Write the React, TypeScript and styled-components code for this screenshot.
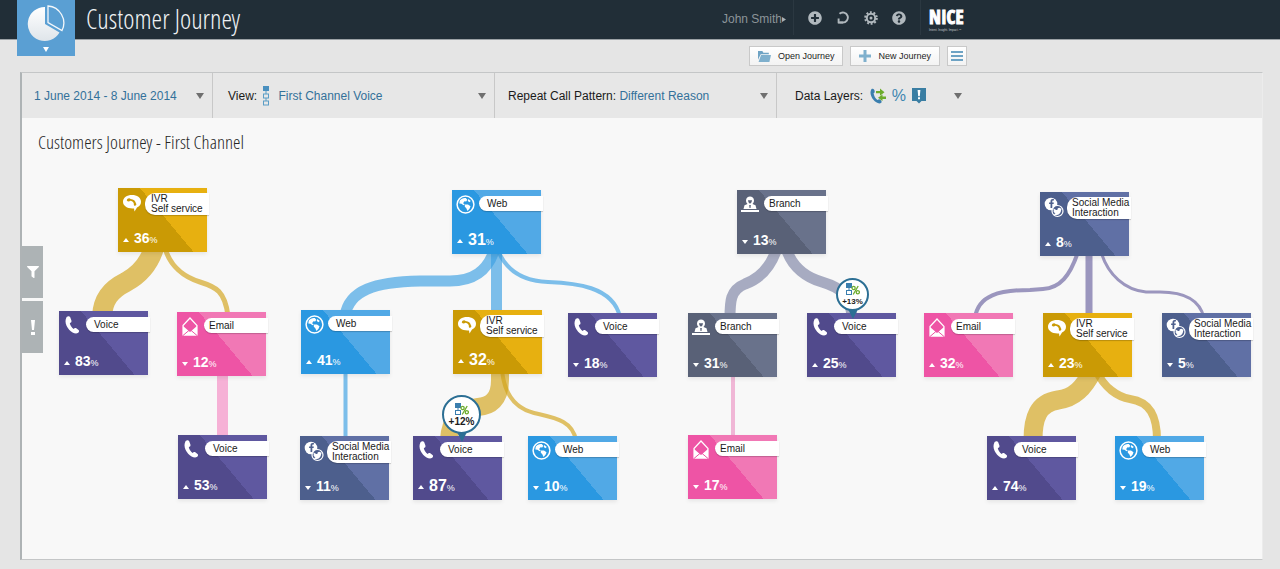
import React from 'react';
import styled, { createGlobalStyle } from 'styled-components';
import { FaPlusCircle, FaQuestionCircle, FaFacebookF, FaTwitter, FaFilter } from 'react-icons/fa';

const sans = '"Liberation Sans", Arial, sans-serif';
const condensed = '"Open Sans Condensed Light", "Liberation Sans Narrow", "Open Sans", sans-serif';

const GlobalStyle = createGlobalStyle`
  * { box-sizing: border-box; }
  body {
    margin: 0;
    background: #e5e5e5;
    font-family: ${sans};
    color: #1d1d1d;
  }
  button, select { font-family: inherit; }
`;

/* ---------- data ---------- */

type Channel = 'ivr' | 'voice' | 'email' | 'web' | 'branch' | 'social';

interface JourneyNode {
  channel: Channel;
  x: number;
  y: number;
  value: number;
  up: boolean;
  large?: boolean;
}

const channels: Record<Channel, { lines: string[]; dark: string; light: string; indent: number }> = {
  ivr: { lines: ['IVR', 'Self service'], dark: '#ca9a05', light: '#e7b010', indent: 6 },
  voice: { lines: ['Voice'], dark: '#514a8c', light: '#5f58a0', indent: 8 },
  email: { lines: ['Email'], dark: '#ee54a5', light: '#f178b5', indent: 5 },
  web: { lines: ['Web'], dark: '#2a98e1', light: '#51a9e6', indent: 8 },
  branch: { lines: ['Branch'], dark: '#596177', light: '#69728b', indent: 5 },
  social: { lines: ['Social Media', 'Interaction'], dark: '#4d5f8d', light: '#6070a5', indent: 5 },
};

const nodes: JourneyNode[] = [
  { channel: 'ivr', x: 96, y: 70, value: 36, up: true },
  { channel: 'voice', x: 37, y: 193, value: 83, up: true },
  { channel: 'email', x: 155, y: 194, value: 12, up: false },
  { channel: 'voice', x: 156, y: 317, value: 53, up: true },
  { channel: 'web', x: 430, y: 72, value: 31, up: true, large: true },
  { channel: 'web', x: 279, y: 192, value: 41, up: true },
  { channel: 'social', x: 278, y: 318, value: 11, up: false },
  { channel: 'ivr', x: 431, y: 192, value: 32, up: true, large: true },
  { channel: 'voice', x: 546, y: 195, value: 18, up: false },
  { channel: 'voice', x: 391, y: 318, value: 87, up: true, large: true },
  { channel: 'web', x: 506, y: 318, value: 10, up: false },
  { channel: 'branch', x: 715, y: 72, value: 13, up: false },
  { channel: 'branch', x: 666, y: 195, value: 31, up: false },
  { channel: 'voice', x: 785, y: 195, value: 25, up: true },
  { channel: 'email', x: 666, y: 317, value: 17, up: false },
  { channel: 'social', x: 1018, y: 74, value: 8, up: true },
  { channel: 'email', x: 902, y: 195, value: 32, up: true },
  { channel: 'ivr', x: 1021, y: 195, value: 23, up: true },
  { channel: 'social', x: 1140, y: 195, value: 5, up: false },
  { channel: 'voice', x: 965, y: 318, value: 74, up: true },
  { channel: 'web', x: 1093, y: 318, value: 19, up: false },
];

const gold = '#d2a218';
const blue = '#3b9fe2';
const slate = '#7d83a4';
const violet = '#6a63a0';
const pink = '#f48cc4';

const links: { d: string; color: string; width: number }[] = [
  { d: 'M154 248C148 267 137 276 126 282C110 290 103 300 102 316', color: gold, width: 20 },
  { d: 'M165 248C170 266 184 277 200 282S225 291 228 316', color: gold, width: 5 },
  { d: 'M222.500 374V440', color: pink, width: 11 },
  { d: 'M495 248C488 272 472 281 450 281L420 281C375 282 349 290 345 316', color: blue, width: 11 },
  { d: 'M496.500 248V316', color: blue, width: 11 },
  { d: 'M497 248C505 270 522 281 548 282S613 286 620 317', color: blue, width: 4 },
  { d: 'M345.500 370V440', color: blue, width: 4 },
  { d: 'M500 370V380C500 400 490 406 478 407C460 409 450 420 449 440', color: gold, width: 18 },
  { d: 'M502 370C504 392 514 408 534 413C555 418 572 420 576 440', color: gold, width: 4 },
  { d: 'M777 248C770 270 756 280 745 284C730 290 730 302 730 318', color: slate, width: 11 },
  { d: 'M786 248C792 268 808 278 822 282C842 288 851 296 852 318', color: slate, width: 11 },
  { d: 'M733 374V440', color: '#ec94c4', width: 4 },
  { d: 'M1078 252C1070 276 1060 288 1043 289L1030 290C1000 290 978 295 975 318', color: violet, width: 4 },
  { d: 'M1089 252V318', color: violet, width: 7 },
  { d: 'M1101 252C1108 275 1125 290 1146 292L1160 292C1185 292 1200 300 1204 318', color: violet, width: 3 },
  { d: 'M1093 370C1084 388 1074 398 1058 400C1038 403 1033 418 1033 440', color: gold, width: 19 },
  { d: 'M1096 370C1104 388 1118 397 1130 399C1150 402 1157 416 1157 440', color: gold, width: 8 },
];

/* ---------- header ---------- */

const Header = styled.header`
  height: 40px;
  background: #212e37;
  border-bottom: 1px solid #9ba1a5;
`;

const HeaderInner = styled.div`
  display: flex;
  align-items: flex-start;
  max-width: 967px;
  padding-left: 17px;
`;

const AppTile = styled.button`
  display: flex;
  flex-direction: column;
  align-items: center;
  justify-content: space-between;
  width: 58px;
  height: 56px;
  padding: 4px 0 4px;
  border: 0;
  background: #5a9fd3;
`;

const AppTitle = styled.h1`
  flex: 1;
  margin: 0 0 0 11px;
  font: 300 27px/38px ${condensed};
  color: #eef1f3;
`;

const UserMenu = styled.button`
  display: flex;
  align-items: center;
  height: 38px;
  padding: 0;
  border: 0;
  background: none;
  font-size: 12px;
  color: #8c9499;
`;

const HeaderTools = styled.nav`
  display: flex;
  align-items: center;
  gap: 14px;
  height: 35px;
  margin-left: 7px;
  padding: 0 14px;
  border-left: 1px solid #2b3841;
  border-right: 1px solid #2b3841;
`;

const ToolButton = styled.button`
  display: flex;
  width: 14px;
  height: 14px;
  padding: 0;
  border: 0;
  background: none;
  color: #b0b8bd;
  svg { width: 14px; height: 14px; }
`;

const Brand = styled.div`
  display: flex;
  flex-direction: column;
  width: 38px;
  margin: 7px 0 0 8px;
  color: #fff;
`;

const BrandName = styled.span`
  font: 700 19px/21px "Liberation Sans Narrow", "Open Sans Condensed", sans-serif;
  -webkit-text-stroke: 1px #fff;
`;

const BrandLine = styled.span`
  font-size: 3px;
  line-height: 4px;
  color: #c3c9cc;
`;

/* ---------- action row ---------- */

const Actions = styled.div`
  display: flex;
  justify-content: flex-end;
  gap: 7px;
  max-width: 967px;
  padding: 6px 0;
`;

const ActionButton = styled.button`
  display: flex;
  align-items: center;
  justify-content: center;
  gap: 7px;
  height: 20px;
  padding: 0 8px;
  border: 1px solid #c9c9c9;
  background: linear-gradient(#fff, #f3f3f3);
  font-size: 9px;
  color: #1d1d1d;
`;

const ListButton = styled(ActionButton)`
  width: 20px;
  padding: 0;
`;

/* ---------- panel ---------- */

const Panel = styled.main`
  margin: 0 17px 10px 20px;
  border: 1px solid #c4c6c7;
  border-left: 2px solid #aeb3b5;
  border-right-color: #ececec;
  background: #f8f8f8;
`;

const Filters = styled.form`
  display: grid;
  grid-template-columns: 191px 282px 282px 1fr;
  height: 45px;
  background: #e7e7e7;
`;

const Filter = styled.div<{ $inset: number }>`
  display: flex;
  align-items: center;
  min-width: 0;
  padding: 0 8px 0 ${(p) => p.$inset}px;
  border-right: 1px solid #c8c8c8;
  font-size: 12px;
  &:last-child { border-right: 0; }
`;

const FilterLabel = styled.label`
  white-space: nowrap;
  color: #1a1a1a;
`;

const FilterSelect = styled.select`
  flex: 1;
  min-width: 0;
  padding: 0;
  border: 0;
  appearance: none;
  background: none;
  font-size: 12px;
  color: #33719a;
`;

const ViewGlyph = styled.span`
  display: flex;
  margin: 0 8px 0 2px;
`;

const LayersButton = styled.button`
  display: flex;
  align-items: center;
  gap: 6px;
  padding: 0;
  border: 0;
  background: none;
`;

const LayerPercent = styled.span`
  font-size: 16px;
  line-height: 18px;
  color: #3f86b0;
`;

const LayersCaret = styled.span`
  display: flex;
  margin-left: 22px;
`;

const Canvas = styled.section`
  position: relative;
  min-height: 441px;
  padding: 12px 16px;
  overflow: hidden;
`;

const CanvasTitle = styled.h2`
  margin: 0;
  font: 300 19px/24px ${condensed};
  color: #262626;
`;

const Links = styled.svg`
  position: absolute;
  left: 0;
  top: 0;
`;

const SideTabs = styled.div`
  position: absolute;
  left: 0;
  top: 128px;
  display: flex;
  flex-direction: column;
  gap: 3px;
`;

const SideTab = styled.button`
  display: flex;
  align-items: center;
  justify-content: center;
  width: 21px;
  height: 52px;
  padding: 0;
  border: 0;
  background: #adb3b5;
  color: #fff;
`;

/* ---------- channel cards ---------- */

const Card = styled.article<{ $x: number; $y: number; $dark: string; $light: string }>`
  position: absolute;
  left: ${(p) => p.$x}px;
  top: ${(p) => p.$y}px;
  display: flex;
  flex-direction: column;
  justify-content: space-between;
  width: 89px;
  height: 64px;
  padding: 5px 0 3px;
  background: linear-gradient(50deg, ${(p) => p.$dark} 53%, ${(p) => p.$light} 53%);
  box-shadow: 0 2px 4px rgba(0, 0, 0, 0.08);
`;

const CardHead = styled.div`
  display: flex;
  align-items: flex-start;
  margin-right: -2px;
`;

const CardIcon = styled.span`
  display: flex;
  flex: 0 0 27px;
  padding-left: 4px;
  color: #fff;
`;

const CardLabel = styled.h3<{ $indent: number; $single: boolean }>`
  flex: 1;
  margin: ${(p) => (p.$single ? '1px' : '0')} 0 0;
  padding: 1px 0 1px ${(p) => p.$indent}px;
  border-radius: ${(p) => (p.$single ? '8px' : '10px')} 0 0 ${(p) => (p.$single ? '8px' : '10px')};
  background: #fff;
  box-shadow: 0 1px 1px rgba(0, 0, 0, 0.2);
  font-size: 10px;
  font-weight: 400;
  line-height: ${(p) => (p.$single ? '13px' : '10px')};
  color: #1a1a1a;
  white-space: nowrap;
  span { display: block; }
`;

const CardValue = styled.p<{ $large?: boolean }>`
  display: flex;
  align-items: baseline;
  margin: 0;
  padding-left: 5px;
  font-size: ${(p) => (p.$large ? '16px' : '14px')};
  font-weight: 700;
  line-height: 17px;
  color: #fff;
  svg { margin-right: 5px; align-self: center; }
  small { font-size: 9px; font-weight: 400; }
`;

/* ---------- badges ---------- */

const Badge = styled.div<{ $x: number; $y: number; $size: number }>`
  position: absolute;
  left: ${(p) => p.$x}px;
  top: ${(p) => p.$y}px;
  display: flex;
  flex-direction: column;
  align-items: center;
  justify-content: center;
  gap: 1px;
  width: ${(p) => p.$size}px;
  height: ${(p) => p.$size}px;
  border: 2px solid #2c6f94;
  border-radius: 50%;
  background: #fff;
  font-size: ${(p) => (p.$size > 36 ? 10 : 8)}px;
  font-weight: 700;
  line-height: 11px;
  &::after {
    content: '';
    position: absolute;
    top: 100%;
    border: 5px solid transparent;
    border-top: 10px solid #2c6f94;
    border-bottom: 0;
  }
`;

/* ---------- icons ---------- */

const Caret = () => (
  <svg width="8" height="6" viewBox="0 0 8 6" aria-hidden="true">
    <path d="M0 0H8L4 6Z" fill="#6f6f6f" />
  </svg>
);

const PieIcon = () => (
  <svg width="38" height="38" viewBox="0 0 38 38" aria-hidden="true">
    <defs>
      <linearGradient id="pie" x1="0" y1="0" x2="0" y2="1">
        <stop offset="0" stopColor="#fff" />
        <stop offset="1" stopColor="#dfe5ea" />
      </linearGradient>
    </defs>
    <path d="M18 3A17 17 0 1 0 32.500 28.500L18 20Z" fill="url(#pie)" />
    <path d="M21 2A17 17 0 0 1 35 26.500L21 18.500Z" fill="none" stroke="#f4f8fb" strokeWidth="1.300" />
  </svg>
);

const RefreshIcon = () => (
  <svg viewBox="0 0 14 14" fill="none" stroke="currentColor" strokeWidth="1.900" aria-hidden="true">
    <path d="M3.500 2.800A5 5 0 1 1 6.500 11.500H3.500" />
    <path d="M2.600 7.500V12.300" />
    <path d="M2 11.500H7" />
  </svg>
);

const GearIcon = () => (
  <svg viewBox="0 0 14 14" fill="none" stroke="currentColor" aria-hidden="true">
    <circle cx="7" cy="7" r="5.800" strokeWidth="2" strokeDasharray="1.900 1.744" />
    <circle cx="7" cy="7" r="4.200" strokeWidth="2" />
    <circle cx="7" cy="7" r="1.500" fill="currentColor" stroke="none" />
  </svg>
);

const ViewIcon = () => (
  <svg width="8" height="20" viewBox="0 0 8 20" aria-hidden="true">
    <path d="M4 5V15" stroke="#5b9dc6" />
    <rect x="1" y="0" width="6" height="5" fill="#4a90bf" />
    <rect x="1.500" y="8" width="5" height="4" fill="#e7e7e7" stroke="#5b9dc6" />
    <rect x="1.500" y="15" width="5" height="4" fill="#e7e7e7" stroke="#5b9dc6" />
  </svg>
);

const CallLayerIcon = () => (
  <svg width="16" height="16" viewBox="0 0 16 16" aria-hidden="true">
    <path d="M1.500 1C4 0 5 2.500 4.600 4.500L3.600 5.200C4 8 5.500 10.500 7.500 12L9 11.200C11 11.500 12.500 13.500 11 15C6 17.500-2.500 7 1.500 1Z" fill="#3a7eae" />
    <path d="M6 3H10V0.500L14.500 4.200L10 7.800V5.300H6Z" fill="#6dac2c" />
    <path d="M16 8.500H12.500V6.500L8 9.800L12.500 13V11H16Z" fill="#6dac2c" />
  </svg>
);

const AlertLayerIcon = () => (
  <svg width="14" height="16" viewBox="0 0 14 16" aria-hidden="true">
    <path d="M0 0H14V13H9.500L7 15.500L4.500 13H0Z" fill="#3a7ea3" />
    <path d="M5.600 2H8.400L7.800 8.300H6.200ZM6 9.300H8V11.300H6Z" fill="#fff" />
  </svg>
);

const BadgeIcon = () => (
  <svg width="14" height="12" viewBox="0 0 14 12" aria-hidden="true">
    <rect x="0" y="0" width="6" height="5" fill="#3a7eae" />
    <path d="M3 5V8" stroke="#3a7eae" />
    <rect x="0.500" y="7.500" width="5" height="4" fill="#fff" stroke="#3a7eae" />
    <g fill="none" stroke="#6dac2c" strokeWidth="1.300">
      <circle cx="7.600" cy="5" r="1.600" />
      <circle cx="11.800" cy="9.200" r="1.600" />
      <path d="M12.200 3L7.200 11.500" />
    </g>
  </svg>
);

const ChannelIcon = ({ channel }: { channel: Channel }) => {
  switch (channel) {
    case 'voice':
      return (
        <svg width="17" height="18" viewBox="-2 0 17 18" aria-hidden="true">
          <path d="M1.600 1C3.200-0.300 4.900 0.200 5.400 1.700L6.400 4.600C6.700 5.900 6 6.600 4.800 7C5.200 9.300 6.600 11.500 8.600 13C9.400 12 10.300 11.700 11.300 12.300L13.500 14C14.500 15 14.100 16.200 12.800 17.100C8 19.700-3 9.500 1.600 1Z" fill="#fff" />
        </svg>
      );
    case 'ivr':
      return (
        <svg width="20" height="20" viewBox="0 0 20 20" aria-hidden="true">
          <path d="M10 2C15 2 19 4.600 19 8.800C19 11.500 17.500 13.400 15 14.600L12.500 18.500L12 15.500C5.500 16 1 13 1 8.800C1 4.600 5 2 10 2Z" fill="#fff" />
          <path d="M4.800 7.400C5 4.800 8 4.600 8.500 6C11.500 6.200 13.600 8 13.900 10.200C15 11.300 14 13 12.600 12.800C11.500 12.300 12 11 11.800 10.400C11.200 8.700 9.800 7.900 8.300 7.700C7.500 8.700 5.600 8.800 4.800 7.400Z" fill="#ca9a05" />
        </svg>
      );
    case 'email':
      return (
        <svg width="18" height="20" viewBox="0 0 18 20" aria-hidden="true">
          <path d="M2 8.500L9 1L16 8.500V18H2Z" fill="none" stroke="#fff" strokeWidth="1.200" />
          <path d="M2 9L9 15L16 9V18.500H2Z" fill="#fff" />
          <path d="M2 18.500L9 12.500L16 18.500" fill="none" stroke="#ee54a5" />
        </svg>
      );
    case 'web':
      return (
        <svg width="19" height="19" viewBox="0 0 19 19" aria-hidden="true">
          <circle cx="9.500" cy="9.500" r="8.400" fill="none" stroke="#fff" strokeWidth="1.500" />
          <path d="M3.800 5.500C5.200 3.600 7.500 2.700 9.800 3.100L11.300 4.800L10.200 6.500L8.500 6.200L7 8.200L8.800 9.200L7.500 10.300L5.500 8.800L3.300 8.500Z" fill="#fff" />
          <path d="M8.800 9.600L12 9.400L14.500 11.300L13.700 13.500L11.500 16L10.300 13.300L8.800 11.800Z" fill="#fff" />
          <path d="M12.300 4L14.800 6L13.300 7.300L11.700 5.700Z" fill="#fff" />
        </svg>
      );
    case 'branch':
      return (
        <svg width="18" height="18" viewBox="0 0 18 18" aria-hidden="true">
          <path d="M5 5.500C5 0 13 0 13 5.500C13 7 12.300 8 11.500 9L14.500 10.300L15.500 14H2.500L3.500 10.300L6.500 9C5.700 8 5 7 5 5.500Z" fill="#fff" />
          <path d="M7 5.500L8 5L9 5.500L10 5L11 5.500L10.400 7.500L9 8.800L7.600 7.500ZM8.200 10H9.800L9.500 13H8.500Z" fill="#596177" />
          <rect x="0" y="15" width="18" height="2" fill="#fff" />
        </svg>
      );
    default:
      return (
        <svg width="20" height="21" viewBox="0 0 20 21" aria-hidden="true">
          <circle cx="7" cy="7" r="6.300" fill="#fff" />
          <FaFacebookF x="3" y="2" size={9} color="#4d5f8d" />
          <circle cx="13.500" cy="14" r="5.500" fill="#4d5f8d" stroke="#fff" strokeWidth="1.200" />
          <FaTwitter x="9" y="10" size={9} color="#fff" />
        </svg>
      );
  }
};

/* ---------- page ---------- */

const NodeCard = ({ node }: { node: JourneyNode }) => {
  const c = channels[node.channel];
  return (
    <Card $x={node.x} $y={node.y} $dark={c.dark} $light={c.light}>
      <CardHead>
        <CardIcon><ChannelIcon channel={node.channel} /></CardIcon>
        <CardLabel $indent={c.indent} $single={c.lines.length === 1}>
          {c.lines.map((line) => <span key={line}>{line}</span>)}
        </CardLabel>
      </CardHead>
      <CardValue $large={node.large}>
        <svg width="6" height="4" viewBox="0 0 6 4" aria-label={node.up ? 'up' : 'down'}>
          <path d={node.up ? 'M0 4H6L3 0Z' : 'M0 0H6L3 4Z'} fill="#fff" />
        </svg>
        {node.value}
        <small>%</small>
      </CardValue>
    </Card>
  );
};

export default function App() {
  return (
    <>
      <GlobalStyle />
      <Header>
        <HeaderInner>
          <AppTile type="button" aria-label="Applications">
            <PieIcon />
            <svg width="6" height="5" viewBox="0 0 6 5" aria-hidden="true"><path d="M0 0H6L3 5Z" fill="#fff" /></svg>
          </AppTile>
          <AppTitle>Customer Journey</AppTitle>
          <UserMenu type="button">
            John Smith
            <svg width="4" height="5" viewBox="0 0 4 5" aria-hidden="true"><path d="M0 0L4 2.500L0 5Z" fill="#aab1b5" /></svg>
          </UserMenu>
          <HeaderTools>
            <ToolButton type="button" aria-label="Add"><FaPlusCircle /></ToolButton>
            <ToolButton type="button" aria-label="Refresh"><RefreshIcon /></ToolButton>
            <ToolButton type="button" aria-label="Settings"><GearIcon /></ToolButton>
            <ToolButton type="button" aria-label="Help"><FaQuestionCircle /></ToolButton>
          </HeaderTools>
          <Brand>
            <BrandName>NICE</BrandName>
            <BrandLine>Intent. Insight. Impact.™</BrandLine>
          </Brand>
        </HeaderInner>
      </Header>

      <Actions>
        <ActionButton type="button">
          <svg width="13" height="11" viewBox="0 0 12 10" aria-hidden="true">
            <path d="M0 0H4L5 1.500H10V3H2.500L0 8Z" fill="#6ea3c4" />
            <path d="M2.800 3.500H12L10.500 10H0.500Z" fill="#7fb0cd" />
          </svg>
          Open Journey
        </ActionButton>
        <ActionButton type="button">
          <svg width="12" height="12" viewBox="0 0 12 12" aria-hidden="true">
            <path d="M6 0V12M0 6H12" stroke="#7fb0cd" strokeWidth="3" />
          </svg>
          New Journey
        </ActionButton>
        <ListButton type="button" aria-label="List">
          <svg width="12" height="10" viewBox="0 0 12 10" aria-hidden="true">
            <path d="M0 1H12M0 5H12M0 9H12" stroke="#6ea3c4" strokeWidth="2" />
          </svg>
        </ListButton>
      </Actions>

      <Panel>
        <Filters>
          <Filter $inset={12}>
            <FilterSelect aria-label="Date range"><option>1 June 2014 - 8 June 2014</option></FilterSelect>
            <Caret />
          </Filter>
          <Filter $inset={15}>
            <FilterLabel htmlFor="view">View:&nbsp;</FilterLabel>
            <ViewGlyph><ViewIcon /></ViewGlyph>
            <FilterSelect id="view"><option>First Channel Voice</option></FilterSelect>
            <Caret />
          </Filter>
          <Filter $inset={13}>
            <FilterLabel htmlFor="pattern">Repeat Call Pattern:&nbsp;</FilterLabel>
            <FilterSelect id="pattern"><option>Different Reason</option></FilterSelect>
            <Caret />
          </Filter>
          <Filter $inset={18}>
            <FilterLabel htmlFor="layers">Data Layers:&nbsp;&nbsp;</FilterLabel>
            <LayersButton id="layers" type="button" aria-haspopup="listbox">
              <CallLayerIcon />
              <LayerPercent>%</LayerPercent>
              <AlertLayerIcon />
              <LayersCaret><Caret /></LayersCaret>
            </LayersButton>
          </Filter>
        </Filters>

        <Canvas>
          <CanvasTitle>Customers Journey - First Channel</CanvasTitle>
          <Links width="1240" height="441" viewBox="22 118 1240 441" fill="none" aria-hidden="true">
            {links.map((link) => (
              <path key={link.d} d={link.d} stroke={link.color} strokeWidth={link.width} strokeOpacity="0.66" />
            ))}
          </Links>
          {nodes.map((node) => <NodeCard key={`${node.x}-${node.y}`} node={node} />)}
          <Badge $x={420} $y={277} $size={39}><BadgeIcon />+12%</Badge>
          <Badge $x={814} $y={160} $size={33}><BadgeIcon />+13%</Badge>
          <SideTabs>
            <SideTab type="button" aria-label="Filter"><FaFilter size={12} /></SideTab>
            <SideTab type="button" aria-label="Alerts">
              <svg width="4" height="15" viewBox="0 0 4 15" aria-hidden="true">
                <path d="M0 0H4L3 10H1ZM0 12H4V15H0Z" fill="#fff" />
              </svg>
            </SideTab>
          </SideTabs>
        </Canvas>
      </Panel>
    </>
  );
}
